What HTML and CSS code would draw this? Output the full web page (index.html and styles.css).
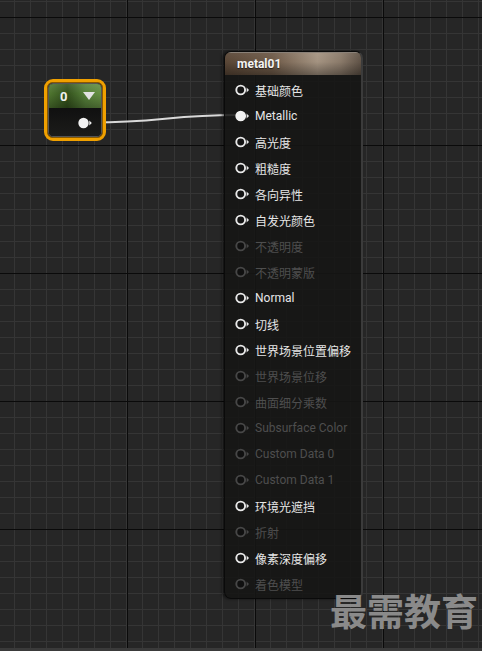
FILE: index.html
```html
<!DOCTYPE html>
<html lang="zh-CN">
<head>
    <meta charset="UTF-8">
    <meta name="viewport" content="width=device-width, initial-scale=1.0">
    <title>metal01</title>
    <link rel="stylesheet" href="styles.css">
</head>
<body>

<div class="graph">

    <svg class="wire" width="482" height="651" viewBox="0 0 482 651">
        <path d="M92 122.5 C 160 122.5, 170 115, 237 115" fill="none" stroke="#d9d9d9" stroke-width="2"/>
    </svg>

    <!-- 常量节点 (已选中) -->
    <div class="const-sel">
        <div class="const-node">
            <div class="const-head">
                <span class="const-val">0</span>
                <span class="const-arrow"></span>
            </div>
            <div class="const-body">
                <svg width="16" height="12" viewBox="0 0 16 12">
                    <circle cx="5.5" cy="6" r="5.2" fill="#f2f2f2"/>
                    <polygon points="11.3,3.6 13.8,6 11.3,8.4" fill="#f2f2f2"/>
                </svg>
            </div>
        </div>
    </div>

    <!-- 材质主节点 -->
    <div class="mat-node">
        <div class="mat-head">metal01</div>
        <div class="mat-body">
            <div class="row"><svg class="pin" viewBox="0 0 16 12"><circle cx="5.7" cy="6" r="4.4"/><polygon points="11.6,3.6 14,6 11.6,8.4"/></svg><span>基础颜色</span></div>
            <div class="row linked"><svg class="pin" viewBox="0 0 16 12"><circle cx="5.7" cy="6" r="4.4"/><polygon points="11.6,3.6 14,6 11.6,8.4"/></svg><span>Metallic</span></div>
            <div class="row"><svg class="pin" viewBox="0 0 16 12"><circle cx="5.7" cy="6" r="4.4"/><polygon points="11.6,3.6 14,6 11.6,8.4"/></svg><span>高光度</span></div>
            <div class="row"><svg class="pin" viewBox="0 0 16 12"><circle cx="5.7" cy="6" r="4.4"/><polygon points="11.6,3.6 14,6 11.6,8.4"/></svg><span>粗糙度</span></div>
            <div class="row"><svg class="pin" viewBox="0 0 16 12"><circle cx="5.7" cy="6" r="4.4"/><polygon points="11.6,3.6 14,6 11.6,8.4"/></svg><span>各向异性</span></div>
            <div class="row"><svg class="pin" viewBox="0 0 16 12"><circle cx="5.7" cy="6" r="4.4"/><polygon points="11.6,3.6 14,6 11.6,8.4"/></svg><span>自发光颜色</span></div>
            <div class="row off"><svg class="pin" viewBox="0 0 16 12"><circle cx="5.7" cy="6" r="4.4"/><polygon points="11.6,3.6 14,6 11.6,8.4"/></svg><span>不透明度</span></div>
            <div class="row off"><svg class="pin" viewBox="0 0 16 12"><circle cx="5.7" cy="6" r="4.4"/><polygon points="11.6,3.6 14,6 11.6,8.4"/></svg><span>不透明蒙版</span></div>
            <div class="row"><svg class="pin" viewBox="0 0 16 12"><circle cx="5.7" cy="6" r="4.4"/><polygon points="11.6,3.6 14,6 11.6,8.4"/></svg><span>Normal</span></div>
            <div class="row"><svg class="pin" viewBox="0 0 16 12"><circle cx="5.7" cy="6" r="4.4"/><polygon points="11.6,3.6 14,6 11.6,8.4"/></svg><span>切线</span></div>
            <div class="row"><svg class="pin" viewBox="0 0 16 12"><circle cx="5.7" cy="6" r="4.4"/><polygon points="11.6,3.6 14,6 11.6,8.4"/></svg><span>世界场景位置偏移</span></div>
            <div class="row off"><svg class="pin" viewBox="0 0 16 12"><circle cx="5.7" cy="6" r="4.4"/><polygon points="11.6,3.6 14,6 11.6,8.4"/></svg><span>世界场景位移</span></div>
            <div class="row off"><svg class="pin" viewBox="0 0 16 12"><circle cx="5.7" cy="6" r="4.4"/><polygon points="11.6,3.6 14,6 11.6,8.4"/></svg><span>曲面细分乘数</span></div>
            <div class="row off"><svg class="pin" viewBox="0 0 16 12"><circle cx="5.7" cy="6" r="4.4"/><polygon points="11.6,3.6 14,6 11.6,8.4"/></svg><span>Subsurface Color</span></div>
            <div class="row off"><svg class="pin" viewBox="0 0 16 12"><circle cx="5.7" cy="6" r="4.4"/><polygon points="11.6,3.6 14,6 11.6,8.4"/></svg><span>Custom Data 0</span></div>
            <div class="row off"><svg class="pin" viewBox="0 0 16 12"><circle cx="5.7" cy="6" r="4.4"/><polygon points="11.6,3.6 14,6 11.6,8.4"/></svg><span>Custom Data 1</span></div>
            <div class="row"><svg class="pin" viewBox="0 0 16 12"><circle cx="5.7" cy="6" r="4.4"/><polygon points="11.6,3.6 14,6 11.6,8.4"/></svg><span>环境光遮挡</span></div>
            <div class="row off"><svg class="pin" viewBox="0 0 16 12"><circle cx="5.7" cy="6" r="4.4"/><polygon points="11.6,3.6 14,6 11.6,8.4"/></svg><span>折射</span></div>
            <div class="row"><svg class="pin" viewBox="0 0 16 12"><circle cx="5.7" cy="6" r="4.4"/><polygon points="11.6,3.6 14,6 11.6,8.4"/></svg><span>像素深度偏移</span></div>
            <div class="row off"><svg class="pin" viewBox="0 0 16 12"><circle cx="5.7" cy="6" r="4.4"/><polygon points="11.6,3.6 14,6 11.6,8.4"/></svg><span>着色模型</span></div>
        </div>
    </div>

    <div class="watermark">最需教育</div>
</div>

</body>
</html>
```

FILE: styles.css
```css
* {
    margin: 0;
    padding: 0;
    box-sizing: border-box;
}

body {
    background: #262626;
    font-family: Roboto, "Noto Sans CJK SC", sans-serif;
}

/* 网格背景: 小格 16px, 大格 128px */
.graph {
    position: relative;
    width: 482px;
    height: 651px;
    overflow: hidden;
    background-color: #262626;
    background-image:
        linear-gradient(to right, #0a0a0a 1px, transparent 1px),
        linear-gradient(to bottom, #0a0a0a 1px, transparent 1px),
        linear-gradient(to right, #353535 1px, transparent 1px),
        linear-gradient(to bottom, #353535 1px, transparent 1px);
    background-size: 128px 100%, 100% 128px, 16px 100%, 100% 16px;
    background-position: 127px 0, 0 17px, 14px 0, 0 1px;
    border-bottom: 3px solid #3a3a3a;
}

.wire {
    position: absolute;
    left: 0;
    top: 0;
}

/* 常量节点 */
.const-sel {
    position: absolute;
    left: 44px;
    top: 79px;
    width: 62px;
    height: 62px;
    border: 3px solid #f0a000;
    border-radius: 9px;
    padding: 1px;
    background: #1a1a1a;
    box-shadow: inset 0 0 0 1px #8a5a00;
}

.const-node {
    height: 100%;
    border-radius: 5px;
    overflow: hidden;
    border: 1px solid #555;
    display: flex;
    flex-direction: column;
}

.const-head {
    height: 24px;
    display: flex;
    align-items: center;
    justify-content: space-between;
    padding: 0 6px 0 11px;
    background:
        linear-gradient(to bottom, rgba(255, 255, 255, 0.1), rgba(0, 0, 0, 0) 40%, rgba(0, 0, 0, 0.3)),
        linear-gradient(to right, #4f7630 0%, #33511c 35%, #56803a 70%, #648e42 100%);
}

.const-val {
    color: #f0f0f0;
    font-size: 13px;
    font-weight: bold;
    line-height: 1;
}

.const-arrow {
    width: 0;
    height: 0;
    border-left: 6px solid transparent;
    border-right: 6px solid transparent;
    border-top: 8px solid #e2e2e2;
}

.const-body {
    flex: 1;
    background: linear-gradient(to bottom, #101010, #1c1c1a);
    display: flex;
    align-items: center;
    justify-content: flex-end;
    padding-right: 7px;
}

.const-body svg {
    display: block;
    margin-top: 1px;
}

/* 材质节点 */
.mat-node {
    position: absolute;
    left: 224px;
    top: 51px;
    width: 139px;
    height: 548px;
    border: 1px solid #0a0a0a;
    border-right: 2px solid #3b3b3b;
    border-radius: 7px;
    overflow: hidden;
    background: rgba(22, 22, 20, 0.88);
    box-shadow: -2px 0 3px rgba(0, 0, 0, 0.5);
}

.mat-head {
    height: 23px;
    line-height: 22px;
    padding-left: 12px;
    color: #f4f4f4;
    font-size: 12px;
    font-weight: bold;
    border-top: 1px solid #8a8178;
    text-shadow: 0 1px 1px rgba(0, 0, 0, 0.6);
    background:
        linear-gradient(to bottom, rgba(255, 255, 255, 0.06), rgba(0, 0, 0, 0) 40%, rgba(0, 0, 0, 0.35)),
        linear-gradient(to right, #594636 0%, #6e5a48 35%, #a49381 68%, #8a7a6a 85%, #5f5246 100%);
}

.mat-body {
    padding-top: 2px;
}

.row {
    height: 26px;
    display: flex;
    align-items: center;
    padding-left: 10px;
    gap: 4px;
    color: #e6e6e6;
    font-size: 12px;
    white-space: nowrap;
}

.pin {
    width: 16px;
    height: 12px;
    flex-shrink: 0;
}

.pin circle {
    fill: #141414;
    stroke: #e8e8e8;
    stroke-width: 1.9;
}

.pin polygon {
    fill: #e8e8e8;
}

.row.linked .pin circle {
    fill: #f2f2f2;
    stroke: #f2f2f2;
}

.row.off {
    color: #4e4e4e;
}

.row.off .pin circle {
    fill: #101010;
    stroke: #474747;
}

.row.off .pin polygon {
    fill: #474747;
}

.watermark {
    position: absolute;
    left: 330px;
    top: 592px;
    font-family: "Noto Sans CJK SC", sans-serif;
    font-size: 37px;
    font-weight: bold;
    line-height: 37px;
    color: #8a8a8a;
}
```
